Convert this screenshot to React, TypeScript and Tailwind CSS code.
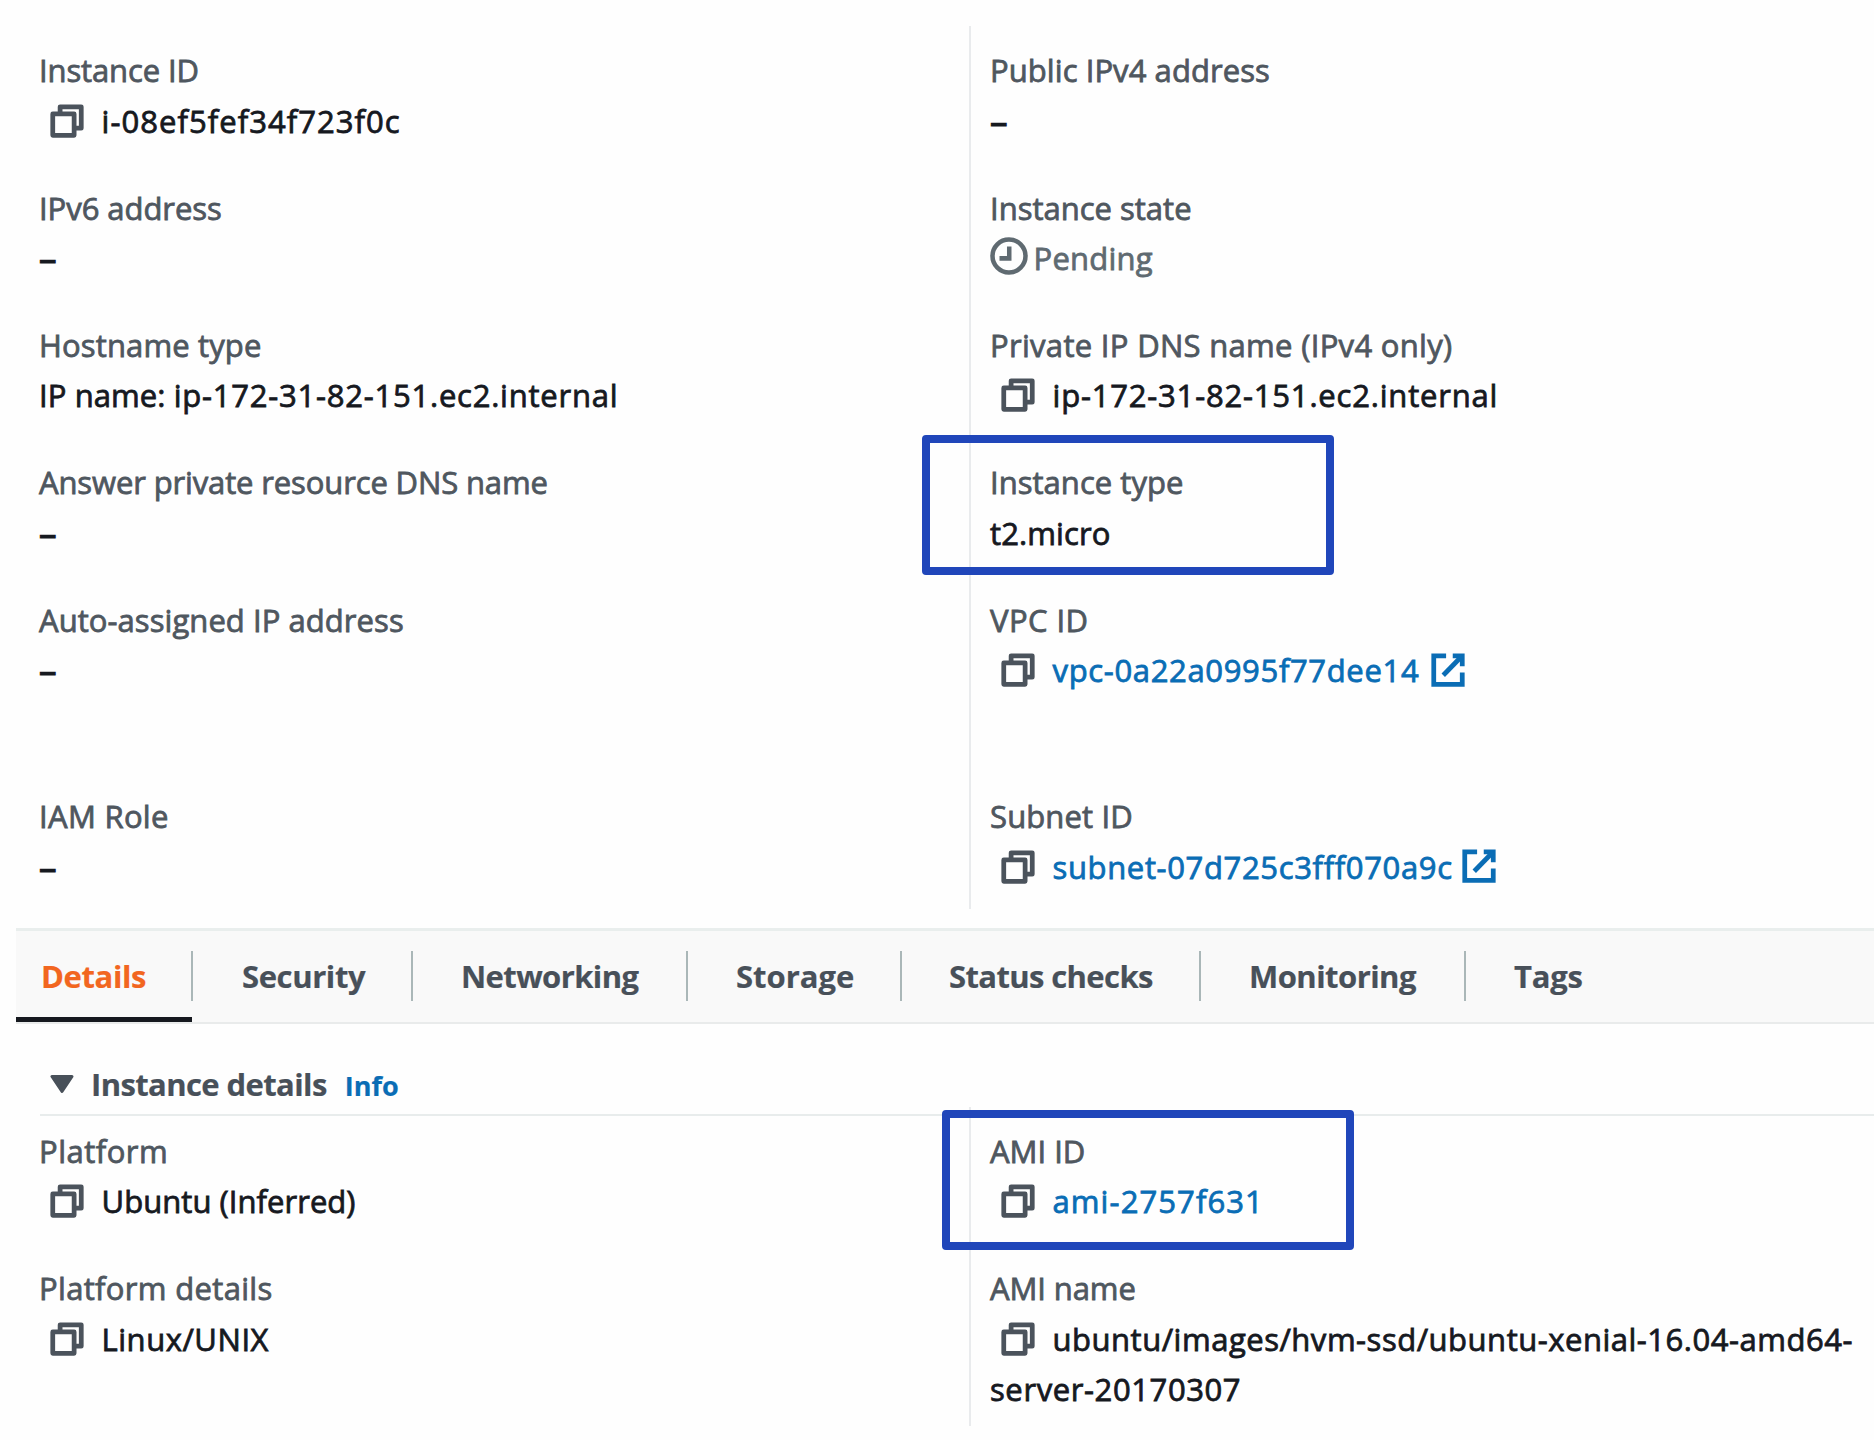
import React from "react";

type FieldProps = {
  label: string;
  labelClass?: string;
  className?: string;
  children: React.ReactNode;
};

function CopyIcon() {
  return (
    <svg viewBox="0 0 16 16" className="mt-[6px] ml-[8.5px] size-[38px] shrink-0" fill="none" stroke="#4b535c" strokeWidth="2" strokeLinejoin="round">
      <path d="M2 5h9v9H2z" />
      <path d="M5.1 5V2H14v9h-3" />
    </svg>
  );
}

function ExternalIcon() {
  return (
    <svg viewBox="0 0 16 16" className="mt-[5.5px] size-[38px] shrink-0" fill="none" stroke="#0a6db5" strokeWidth="2">
      <path d="M10 2h4v4.4" />
      <path d="m6 10.2 8-8.2" />
      <path d="M14 9v5H2V2h5.2" />
    </svg>
  );
}

function PendingIcon() {
  return (
    <svg viewBox="0 0 16 16" className="mt-[4px] -ml-[0.5px] size-[38px] shrink-0" fill="none" stroke="#5f6a71" strokeWidth="1.9">
      <circle cx="8" cy="8" r="6.95" />
      <path d="M8.1 4v5H4" />
    </svg>
  );
}

function Field({ label, labelClass = "", className = "h-[137.4px]", children }: FieldProps) {
  return (
    <div className={`relative leading-[50.4px] whitespace-nowrap ${className}`}>
      <div className={`text-[#4f575f] ${labelClass}`}>{label}</div>
      <div className="text-[#16191f]">{children}</div>
    </div>
  );
}

function Copyable({ children }: { children: React.ReactNode }) {
  return (
    <div className="flex">
      <CopyIcon />
      <div className="ml-[16px] flex">{children}</div>
    </div>
  );
}

function Dash() {
  return <span className="text-[35px] [-webkit-text-stroke:1.2px]">–</span>;
}

function Highlight({ className }: { className: string }) {
  return <div className={`absolute h-[140px] w-[412px] rounded-[4px] border-8 border-[#2046ba] ${className}`} />;
}

const tabs = [
  { name: "Details", width: "w-[176px]", text: "pl-[25px] tracking-[-0.39px] text-[#f2661f]" },
  { name: "Security", width: "w-[220px]", text: "pl-[50px] tracking-[-0.39px]" },
  { name: "Networking", width: "w-[275px]", text: "pl-[49px] tracking-[-0.6px]" },
  { name: "Storage", width: "w-[214px]", text: "pl-[49px] tracking-[0px]" },
  { name: "Status checks", width: "w-[299px]", text: "pl-[48px] tracking-[-0.61px]" },
  { name: "Monitoring", width: "w-[265px]", text: "pl-[49px] tracking-[-0.54px]" },
  { name: "Tags", width: "w-[409px]", text: "pl-[49px] tracking-[-0.23px]" },
];

export default function App() {
  return (
    <div className="h-[1440px] w-[1874px] overflow-hidden bg-[#fefefe] pt-[26px] font-['Open_Sans',sans-serif] text-[31px] [-webkit-text-stroke:0.8px]">
      <section className="flex h-[883px]">
        <div className="w-[969px] pt-[19.2px] pl-[39px]">
          <Field label="Instance ID" labelClass="tracking-[-0.12px]">
            <Copyable><span className="tracking-[1.06px]">i-08ef5fef34f723f0c</span></Copyable>
          </Field>
          <Field label="IPv6 address" labelClass="tracking-[-0.05px]"><Dash /></Field>
          <Field label="Hostname type" labelClass="tracking-[0.14px]">
            <span className="tracking-[0.09px]">IP name: </span>
            <span className="tracking-[0.77px]">ip-172-31-82-151.ec2.internal</span>
          </Field>
          <Field label="Answer private resource DNS name" labelClass="tracking-[-0.13px]"><Dash /></Field>
          <Field label="Auto-assigned IP address" labelClass="tracking-[0.06px]" className="h-[196.6px]"><Dash /></Field>
          <Field label="IAM Role" labelClass="tracking-[0.31px]"><Dash /></Field>
        </div>
        <div className="w-[905px] border-l-2 border-[#e9ebed] pt-[19.2px] pl-[19px]">
          <Field label="Public IPv4 address" labelClass="tracking-[0.07px]"><Dash /></Field>
          <Field label="Instance state" labelClass="tracking-[0px]">
            <div className="flex text-[#5f6a71]">
              <PendingIcon />
              <span className="ml-[6px] tracking-[0.25px]">Pending</span>
            </div>
          </Field>
          <Field label="Private IP DNS name (IPv4 only)" labelClass="tracking-[0.31px]">
            <Copyable><span className="tracking-[0.81px]">ip-172-31-82-151.ec2.internal</span></Copyable>
          </Field>
          <Field label="Instance type" labelClass="tracking-[0.03px]">
            <span className="tracking-[0.12px]">t2.micro</span>
            <Highlight className="-top-[22px] -left-[68px]" />
          </Field>
          <Field label="VPC ID" labelClass="tracking-[0.45px]" className="h-[196.6px]">
            <Copyable>
              <a className="w-[376px] tracking-[0.66px] text-[#0a6db5]">vpc-0a22a0995f77dee14</a>
              <ExternalIcon />
            </Copyable>
          </Field>
          <Field label="Subnet ID" labelClass="tracking-[0.13px]">
            <Copyable>
              <a className="w-[407px] tracking-[0.65px] text-[#0a6db5]">subnet-07d725c3fff070a9c</a>
              <ExternalIcon />
            </Copyable>
          </Field>
        </div>
      </section>

      <nav className="mt-[19px] ml-[16px] flex h-[96px] border-t-3 border-b-2 border-t-[#e9eeed] border-b-[#e9ebeb] bg-[#f9f9f9] font-bold text-[#485059] [-webkit-text-stroke:0.2px]">
        {tabs.map((tab, i) => (
          <div key={tab.name} className={`relative shrink-0 pt-[20px] ${tab.width}`}>
            <div className={`h-[50px] leading-[51px] ${i < tabs.length - 1 ? "-mr-px border-r-2 border-[#aab7b8]" : ""} ${tab.text}`}>{tab.name}</div>
            {i === 0 && <div className="mt-[16px] h-[5px] bg-[#16191f]" />}
          </div>
        ))}
      </nav>

      <div className="ml-[40px] flex h-[92px] border-b-2 border-[#e8ecec] pt-[35px] leading-[51px] font-bold [-webkit-text-stroke:0.2px]">
        <svg viewBox="0 0 24 20" className="mt-[15px] ml-[10px] h-5 w-6" fill="#485059" stroke="#485059" strokeWidth="3" strokeLinejoin="round">
          <path d="M2 2.5h20L12 17.5z" />
        </svg>
        <span className="ml-[17px] tracking-[-0.6px] text-[#485059]">Instance details</span>
        <span className="mt-px ml-[18px] text-[27px] tracking-[0px] text-[#0a6db5]">Info</span>
      </div>

      <section className="-mt-[9px] flex h-[319px]">
        <div className="w-[969px] pt-[18.8px] pl-[39px]">
          <Field label="Platform" labelClass="tracking-[0.5px]">
            <Copyable><span className="tracking-[0.05px]">Ubuntu (Inferred)</span></Copyable>
          </Field>
          <Field label="Platform details" labelClass="tracking-[0.33px]">
            <Copyable><span className="tracking-[0.54px]">Linux/UNIX</span></Copyable>
          </Field>
        </div>
        <div className="w-[905px] border-l-2 border-[#e9ebed] pt-[18.8px] pl-[19px]">
          <Field label="AMI ID" labelClass="tracking-[0px]">
            <Copyable><a className="tracking-[1.1px] text-[#0a6db5]">ami-2757f631</a></Copyable>
            <Highlight className="-top-[16px] -left-[48px]" />
          </Field>
          <Field label="AMI name" labelClass="tracking-[-0.1px]">
            <Copyable><span className="tracking-[0.52px]">ubuntu/images/hvm-ssd/ubuntu-xenial-16.04-amd64-</span></Copyable>
            <div className="tracking-[0.6px]">server-20170307</div>
          </Field>
        </div>
      </section>
    </div>
  );
}
